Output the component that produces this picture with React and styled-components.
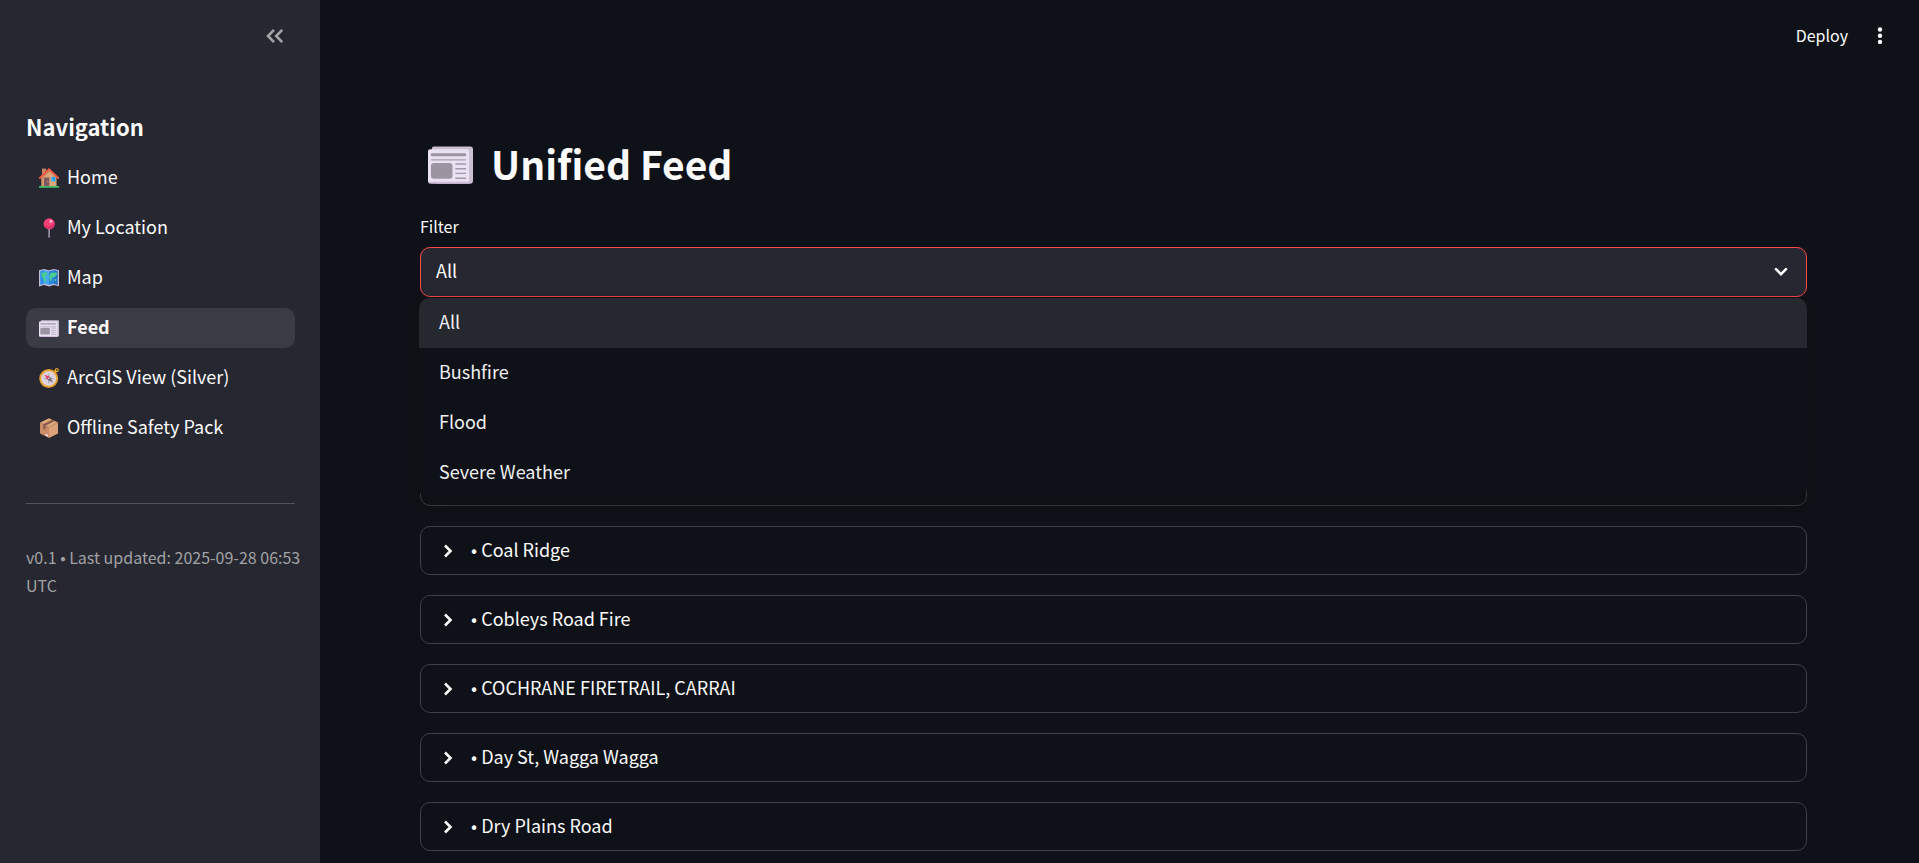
import React, { useState } from "react";
import styled, { createGlobalStyle, css } from "styled-components";

const GlobalStyle = createGlobalStyle`
  *, *::before, *::after { box-sizing: border-box; }
  body {
    margin: 0;
    background: #0e1117;
    color: #fafafa;
    font-family: "Noto Sans CJK KR", "Noto Sans", sans-serif;
    font-size: 18px;
    line-height: 28px;
  }
  button, select { font: inherit; color: inherit; }
`;

const Shell = styled.div`
  display: flex;
  min-height: 100vh;
`;

const Sidebar = styled.aside`
  flex: 0 0 320px;
  padding: 0 25px 0 26px;
  background: #262730;
`;

const SidebarHeader = styled.div`
  display: flex;
  justify-content: flex-end;
  align-items: center;
  height: 72px;
`;

const IconButton = styled.button`
  display: inline-flex;
  align-items: center;
  justify-content: center;
  width: 40px;
  height: 40px;
  padding: 0;
  border: 0;
  background: transparent;
  color: ${(p) => (p.$muted ? "#a5a6a9" : "#fafafa")};
  cursor: pointer;
`;

const SidebarTitle = styled.h2`
  margin: 38px 0 16px;
  font-size: 22px;
  font-weight: 700;
  line-height: 32px;
`;

const NavList = styled.nav`
  display: flex;
  flex-direction: column;
  gap: 10px;
`;

const NavLink = styled.a`
  display: flex;
  align-items: center;
  gap: 8px;
  height: 40px;
  padding: 0 13px;
  border-radius: 10px;
  color: #fafafa;
  text-decoration: none;
  white-space: nowrap;
  ${(p) =>
    p.$active &&
    css`
      background: #3b3b46;
      font-weight: 700;
    `}
`;

const Label = styled.span`
  padding-bottom: 4px;
`;

const Divider = styled.hr`
  height: 1px;
  margin: 55px 0 39px;
  border: 0;
  background: #51525a;
`;

const Caption = styled.p`
  margin: 0 -10px 0 0;
  color: #a2a2a6;
  font-size: 16px;
`;

const Main = styled.main`
  flex: 1;
  min-width: 0;
`;

const Toolbar = styled.header`
  display: flex;
  justify-content: flex-end;
  align-items: center;
  gap: 12px;
  height: 72px;
  padding-right: 19px;
`;

const DeployButton = styled.button`
  padding: 0 0 2px;
  border: 0;
  background: transparent;
  font-size: 16px;
  cursor: pointer;
`;

const Content = styled.div`
  padding: 58px 112px 10px 100px;
`;

const PageTitle = styled.h1`
  display: flex;
  align-items: center;
  gap: 18px;
  margin: 0 0 12px;
  padding-left: 8px;
  font-size: 39px;
  font-weight: 600;
  line-height: 66px;
`;

const Field = styled.div`
  position: relative;
`;

const FieldLabel = styled.label`
  display: block;
  margin-bottom: 7px;
  font-size: 16px;
`;

const SelectBox = styled.div`
  display: grid;
  align-items: center;
  > * { grid-area: 1 / 1; }
  > svg {
    justify-self: end;
    margin-right: 19px;
    pointer-events: none;
  }
`;

const Select = styled.select`
  width: 100%;
  height: 50px;
  padding: 0 15px 4px;
  border: 1px solid #ff4b4b;
  border-radius: 10px;
  outline: 0;
  background: #262730;
  appearance: none;
`;

const OptionList = styled.ul`
  position: absolute;
  top: 100%;
  left: -1px;
  right: 0;
  z-index: 1;
  margin: 1px 0 0;
  padding: 0;
  overflow: hidden;
  border-radius: 10px;
  background: #0e1117;
  box-shadow: 0 4px 16px rgba(18, 17, 15, 0.5);
  list-style: none;
`;

const Option = styled.li`
  display: flex;
  align-items: center;
  height: 50px;
  padding: 0 20px;
  background: ${(p) => (p.$selected ? "#262830" : "transparent")};
  color: #f0f0f1;
  cursor: pointer;
`;

const Feed = styled.section`
  display: flex;
  flex-direction: column;
  gap: 20px;
  padding-top: 22px;
`;

const Expander = styled.details`
  border: 1px solid #3d4044;
  border-radius: 10px;
`;

const ExpanderSummary = styled.summary`
  display: flex;
  align-items: center;
  gap: 13px;
  height: 47px;
  padding: 0 17px;
  list-style: none;
  cursor: pointer;
`;

const Chevron = ({ d, size = 20 }) => (
  <svg width={size} height={size} viewBox="0 0 20 20" fill="none" stroke="currentColor" strokeWidth="2.6" aria-hidden="true">
    <path d={d} />
  </svg>
);

const House = () => (
  <svg width="20" height="20" viewBox="0 0 20 20" aria-hidden="true">
    <path d="M3 .6h4v6H3z" fill="#c88662" />
    <path d="M2.5 8.5 10 1.5l7.5 7V19h-15z" fill="#dda77b" />
    <path d="M2.5 8.5 10 1.5v3L4.5 10v9h-2z" fill="#c99068" />
    <path d="M.8 9.9 10 1.3l9.2 8.6" fill="none" stroke="#ef5944" strokeWidth="2" strokeLinecap="round" />
    <path d="M5 9.5h5.3V18H5z" fill="#80575a" />
    <path d="M8.3 13h1v1h-1z" fill="#d9a77e" />
    <path d="M12.2 9h4v4.4h-4z" fill="#35b7ff" />
    <path d="m12.2 9 4 4.4v-4.4z" fill="#1e98ec" />
    <path d="M0 18h20v1.8H0z" fill="#3cbd68" />
  </svg>
);

const Pin = () => (
  <svg width="20" height="20" viewBox="0 0 20 20" aria-hidden="true">
    <path d="M9.3 10h1.6v9.2l-.8.8-.8-.8z" fill="#a395ad" />
    <circle cx="10.2" cy="5.9" r="5.6" fill="#f43f78" />
    <path d="M5.2 7.8a5.6 5.6 0 0 0 10.4-3.2c-1.8 3.7-5.7 5-10.4 3.2z" fill="#d92d68" />
    <circle cx="12" cy="3.2" r="1.5" fill="#ffb3ca" />
  </svg>
);

const WorldMap = () => (
  <svg width="20" height="20" viewBox="0 0 20 20" aria-hidden="true">
    <path d="M0 2.2 5 1l5 1.3L15 1l5 1.2v16L15 17l-5 1.5L5 17 0 18.5z" fill="#c7bbd4" />
    <path d="M1.2 3 5.2 2v13.8L1.2 17z" fill="#2f8fec" />
    <path d="M5.2 2 10 3.2V17l-4.8-1.2z" fill="#46a8f6" />
    <path d="m10 3.2 5-1.2v13.8L10 17z" fill="#2b86dd" />
    <path d="m15 2 3.8 1v14L15 15.8z" fill="#2573c8" />
    <path d="m2.2 4.8 5-.4 1.7 1.8-1.5.5-1.2 2-1.4.4 2.5 2.1-.9 2.7-1.1.9-.8-3.5-1.4-2.5zM10.5 6l2.4-1.2 4.8-.2.3 2.1-1.5.5.1 2.1-1.7-.8-.7 1.5-1.2-1.4-.5 4-1.5.5-.3-3.1-.8-1.1 1.3-1.8zM15.7 11l1.8.4-.7 1.7-1.5-.5z" fill="#49d18c" />
  </svg>
);

const Newspaper = ({ width, height }) => (
  <svg width={width} height={height} viewBox="0 0 46 38" aria-hidden="true">
    <path d="M6 0h37a3 3 0 0 1 3 3v32a3 3 0 0 1-3 3H8V4H4V2a2 2 0 0 1 2-2z" fill="#cbbfd2" />
    <path d="M2 3h38a2 2 0 0 1 2 2v31a2 2 0 0 0 2 2H3a3 3 0 0 1-3-3V5a2 2 0 0 1 2-2z" fill="#eae1f3" />
    <path d="M1 36h42v2H3z" fill="#d1bddc" />
    <rect x="3" y="7" width="36" height="3" rx="1" fill="#9c94a1" />
    <rect x="3" y="13" width="36" height="1.4" rx=".5" fill="#a79dac" />
    <rect x="3" y="17" width="22" height="16" rx="3" fill="#9c94a1" />
    <path d="M28 18h11M28 22.8h11M28 27.6h11M28 32.5h11" stroke="#a298a9" strokeWidth="1.4" />
  </svg>
);

const Compass = () => (
  <svg width="20" height="20" viewBox="0 0 20 20" aria-hidden="true">
    <circle cx="17.8" cy="2.2" r="1.5" fill="none" stroke="#d99b28" strokeWidth="1.2" />
    <path d="m14.5 3.7 1.8-2.1 2 2-2 2z" fill="#eeb530" />
    <circle cx="9.7" cy="10.5" r="8.5" fill="#dcd1e2" stroke="#e29c32" strokeWidth="1.9" />
    <circle cx="9.7" cy="10.5" r="7.3" fill="none" stroke="#f7cd69" strokeWidth=".5" />
    <path d="m9.7 4.5 1 5 5.2 1-5.2 1-1 5.2-1-5.2-5.2-1 5.2-1z" fill="#a6a0b0" />
    <path d="m5.4 6.4 5.5 2.7-2.4 2.5z" fill="#ef365f" />
    <path d="m14.1 14.7-2.8-5.5-2.7 2.4z" fill="#6f6572" />
    <circle cx="9.8" cy="10.4" r=".7" fill="#ddd" />
  </svg>
);

const Parcel = () => (
  <svg width="20" height="20" viewBox="0 0 20 20" aria-hidden="true">
    <path d="m1 4.6 9-4.4 9 4.4-9 4.7z" fill="#dda779" />
    <path d="m1 4.6 9 4.7V20l-9-4.6z" fill="#c98c67" />
    <path d="m19 4.6-9 4.7V20l9-4.6z" fill="#dba279" />
    <path d="m15.8 3-2.6-1.3-9 4.6v4.2l2.4 1.2V7.6z" fill="#8a5b4c" />
    <path d="M6.5 15.5 9 16.8v2l-2.5-1.3z" fill="#f2dce7" />
  </svg>
);

const navItems = [
  { label: "Home", icon: <House /> },
  { label: "My Location", icon: <Pin /> },
  { label: "Map", icon: <WorldMap /> },
  { label: "Feed", icon: <Newspaper width={20} height={17} />, active: true },
  { label: "ArcGIS View (Silver)", icon: <Compass /> },
  { label: "Offline Safety Pack", icon: <Parcel /> },
];

const filters = ["All", "Bushfire", "Flood", "Severe Weather"];

const incidents = [
  "",
  "",
  "",
  "Coal Ridge",
  "Cobleys Road Fire",
  "COCHRANE FIRETRAIL, CARRAI",
  "Day St, Wagga Wagga",
  "Dry Plains Road",
];

export default function App() {
  const [filter, setFilter] = useState("All");

  return (
    <>
      <GlobalStyle />
      <Shell>
        <Sidebar>
          <SidebarHeader>
            <IconButton $muted aria-label="Collapse sidebar">
              <Chevron d="M9 3.8 3 10l6 6.2M17.2 3.8l-6 6.2 6 6.2" />
            </IconButton>
          </SidebarHeader>
          <SidebarTitle>Navigation</SidebarTitle>
          <NavList>
            {navItems.map((item) => (
              <NavLink key={item.label} href="#" $active={item.active} aria-current={item.active ? "page" : undefined}>
                {item.icon}
                <Label>{item.label}</Label>
              </NavLink>
            ))}
          </NavList>
          <Divider />
          <Caption>v0.1 • Last updated: 2025-09-28 06:53 UTC</Caption>
        </Sidebar>

        <Main>
          <Toolbar>
            <DeployButton>Deploy</DeployButton>
            <IconButton aria-label="Main menu">
              <svg width="20" height="20" viewBox="0 0 20 20" fill="currentColor" aria-hidden="true">
                <circle cx="10" cy="3.5" r="2.2" />
                <circle cx="10" cy="9.7" r="2.2" />
                <circle cx="10" cy="15.9" r="2.2" />
              </svg>
            </IconButton>
          </Toolbar>
          <Content>
            <PageTitle>
              <Newspaper width={45} height={38} />
              <Label>Unified Feed</Label>
            </PageTitle>
            <Field>
              <FieldLabel htmlFor="filter">Filter</FieldLabel>
              <SelectBox>
                <Select id="filter" value={filter} onChange={(e) => setFilter(e.target.value)}>
                  {filters.map((name) => (
                    <option key={name}>{name}</option>
                  ))}
                </Select>
                <svg width="14" height="10" viewBox="0 0 14 10" fill="none" stroke="currentColor" strokeWidth="2.6" strokeLinecap="round" aria-hidden="true">
                  <path d="m2 2.2 5 5 5-5" />
                </svg>
              </SelectBox>
              <OptionList role="listbox" aria-label="Filter">
                {filters.map((name) => (
                  <Option key={name} role="option" aria-selected={name === filter} $selected={name === filter} onClick={() => setFilter(name)}>
                    <Label>{name}</Label>
                  </Option>
                ))}
              </OptionList>
            </Field>
            <Feed>
              {incidents.map((title, i) => (
                <Expander key={i}>
                  <ExpanderSummary>
                    <Chevron d="m7 4.5 5.5 5.5L7 15.5" />
                    {title && <Label>{`• ${title}`}</Label>}
                  </ExpanderSummary>
                </Expander>
              ))}
            </Feed>
          </Content>
        </Main>
      </Shell>
    </>
  );
}
